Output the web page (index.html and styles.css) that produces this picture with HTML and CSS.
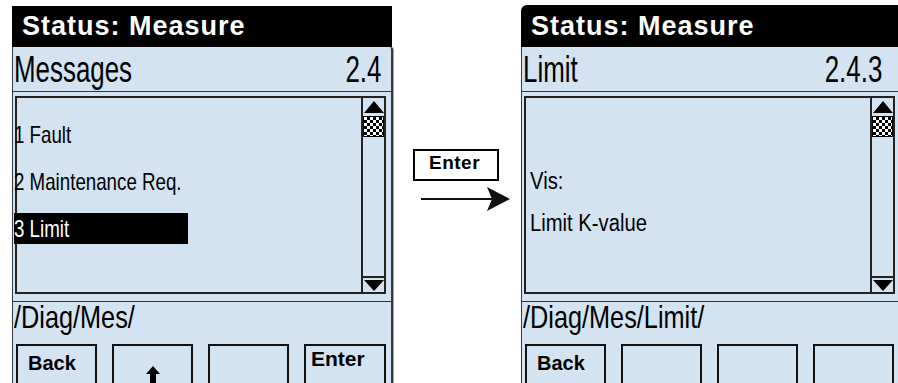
FILE: index.html
```html
<!DOCTYPE html>
<html>
<head>
<meta charset="utf-8">
<title>Status: Measure</title>
<link rel="stylesheet" href="styles.css">
</head>
<body>
<div class="stage">
  <section class="screen">
    <div class="status">Status: Measure</div>
    <div class="panel">
      <div class="head"><span class="cond">Messages</span><span class="cond num">2.4</span></div>
      <div class="listbox">
        <div class="items">
          <div class="item"><span class="cond">1 Fault</span></div>
          <div class="item"><span class="cond">2 Maintenance Req.</span></div>
          <div class="item sel"><span class="cond">3 Limit</span></div>
        </div>
        <div class="scroll">
          <div class="up"></div>
          <div class="thumb"></div>
          <div class="track"></div>
          <div class="down"></div>
        </div>
      </div>
      <div class="path"><span class="cond">/Diag/Mes/</span></div>
      <div class="keys">
        <div class="key key-back">Back</div>
        <div class="key key-arrow">
          <svg width="14" height="18" viewBox="0 0 14 18"><polygon points="7,0 14,8 10,8 10,18 4,18 4,8 0,8" fill="#000"/></svg>
        </div>
        <div class="key"></div>
        <div class="key key-enter">Enter</div>
      </div>
    </div>
  </section>

  <div class="mid">
    <div class="enterbox">Enter</div>
    <svg class="arrow" width="90" height="26" viewBox="0 0 90 26">
      <line x1="0" y1="13" x2="72" y2="13" stroke="#111" stroke-width="2"/>
      <polygon points="66,1 89,13 66,25 71,13" fill="#111"/>
    </svg>
  </div>

  <section class="screen screen-right">
    <div class="status">Status: Measure</div>
    <div class="panel">
      <div class="head"><span class="cond">Limit</span><span class="cond num">2.4.3</span></div>
      <div class="listbox">
        <div class="items items-plain">
          <div class="line"><span class="cond">Vis:</span></div>
          <div class="line"><span class="cond">Limit K-value</span></div>
        </div>
        <div class="scroll">
          <div class="up"></div>
          <div class="thumb"></div>
          <div class="track"></div>
          <div class="down"></div>
        </div>
      </div>
      <div class="path"><span class="cond">/Diag/Mes/Limit/</span></div>
      <div class="keys">
        <div class="key key-back">Back</div>
        <div class="key"></div>
        <div class="key"></div>
        <div class="key"></div>
      </div>
    </div>
  </section>
</div>
</body>
</html>
```

FILE: styles.css
```css
* {
  box-sizing: border-box;
  margin: 0;
  padding: 0;
}

html, body {
  width: 898px;
  height: 383px;
  overflow: hidden;
  background: #fff;
}

body {
  font-family: "Liberation Sans", Arial, sans-serif;
  color: #000;
}

.stage {
  display: flex;
  align-items: flex-start;
  padding: 6px 0 0 12px;
}

.screen {
  width: 381px;
  flex-shrink: 0;
}

.screen-right {
  margin-top: -1px;
}

.status {
  height: 41px;
  margin-right: 1px;
  background: #000;
  color: #fff;
  font-weight: bold;
  font-size: 27px;
  letter-spacing: 1px;
  line-height: 41px;
  padding-left: 10px;
  white-space: nowrap;
}

.screen-right .status {
  height: 42px;
  line-height: 43px;
  border-top-left-radius: 6px;
}

.panel {
  height: 345px;
  background: #d4e3f2;
  border-left: 1px solid #3a3a3a;
  border-right: 2px solid #3a3a3a;
  box-shadow: 1px 0 0 #a0a0a0;
  border-top-right-radius: 3px;
}

.cond {
  display: inline-block;
  white-space: nowrap;
  transform: scaleX(0.7);
  transform-origin: left center;
}

.head {
  display: flex;
  justify-content: space-between;
  height: 45px;
  border-bottom: 1px solid #333;
  padding: 4px 10px 0 1px;
  font-size: 37px;
  line-height: 38px;
}

.head .num {
  transform-origin: right center;
}

.screen-right .head {
  padding-right: 18px;
}

.listbox {
  display: flex;
  height: 198px;
  margin: 4px 5px 0 2px;
  border: 2px solid #222;
}

.items {
  flex: 1;
  display: flex;
  flex-direction: column;
  gap: 16px;
  padding-top: 21px;
}

.item {
  width: 174px;
  height: 31px;
  margin-left: -3px;
  font-size: 24px;
  line-height: 31px;
}

.item .cond {
  transform: scaleX(0.78);
}

.sel {
  background: #000;
  color: #fff;
}

.items-plain {
  gap: 18px;
  padding: 71px 0 0 4px;
}

.line {
  font-size: 23px;
  line-height: 24px;
}

.line .cond {
  transform: scaleX(0.88);
}

.scroll {
  width: 23px;
  display: flex;
  flex-direction: column;
  border-left: 2px solid #222;
}

.up {
  height: 15px;
  display: flex;
  justify-content: center;
  align-items: flex-end;
}

.up::after {
  content: "";
  border-left: 10px solid transparent;
  border-right: 10px solid transparent;
  border-bottom: 12px solid #000;
}

.thumb {
  height: 21px;
  margin-top: 3px;
  border: 1px solid #000;
  background-color: #000;
  background-image: repeating-conic-gradient(#000 0 25%, #fff 0 50%);
  background-size: 6px 6px;
}

.track {
  flex: 1;
}

.down {
  height: 16px;
  border-top: 2px solid #222;
  display: flex;
  justify-content: center;
  padding-top: 2px;
}

.down::after {
  content: "";
  border-left: 10px solid transparent;
  border-right: 10px solid transparent;
  border-top: 11px solid #000;
}

.path {
  height: 43px;
  margin-top: 7px;
  border-top: 1px solid #333;
  padding-left: 1px;
  font-size: 32px;
  line-height: 31px;
}

.path .cond {
  transform: scaleX(0.79);
}

.keys {
  display: flex;
  gap: 15px;
  padding-left: 3px;
}

.key {
  width: 81px;
  height: 50px;
  flex-shrink: 0;
  border: 2px solid #111;
  font-weight: bold;
}

.key-back {
  font-size: 20px;
  line-height: 20px;
  padding: 7px 0 0 10px;
}

.key-enter {
  width: 82px;
  font-size: 21px;
  line-height: 21px;
  padding: 2px 0 0 5px;
}

.key-arrow {
  display: flex;
  justify-content: center;
  padding-top: 20px;
}

.mid {
  width: 128px;
  flex-shrink: 0;
  display: flex;
  flex-direction: column;
  padding: 143px 0 0 20px;
}

.enterbox {
  width: 86px;
  height: 32px;
  border: 2px solid #000;
  font-weight: bold;
  font-size: 19px;
  letter-spacing: 0.5px;
  line-height: 20px;
  padding: 2px 0 0 14px;
}

.arrow {
  display: block;
  margin: 5px 0 0 8px;
}
```
